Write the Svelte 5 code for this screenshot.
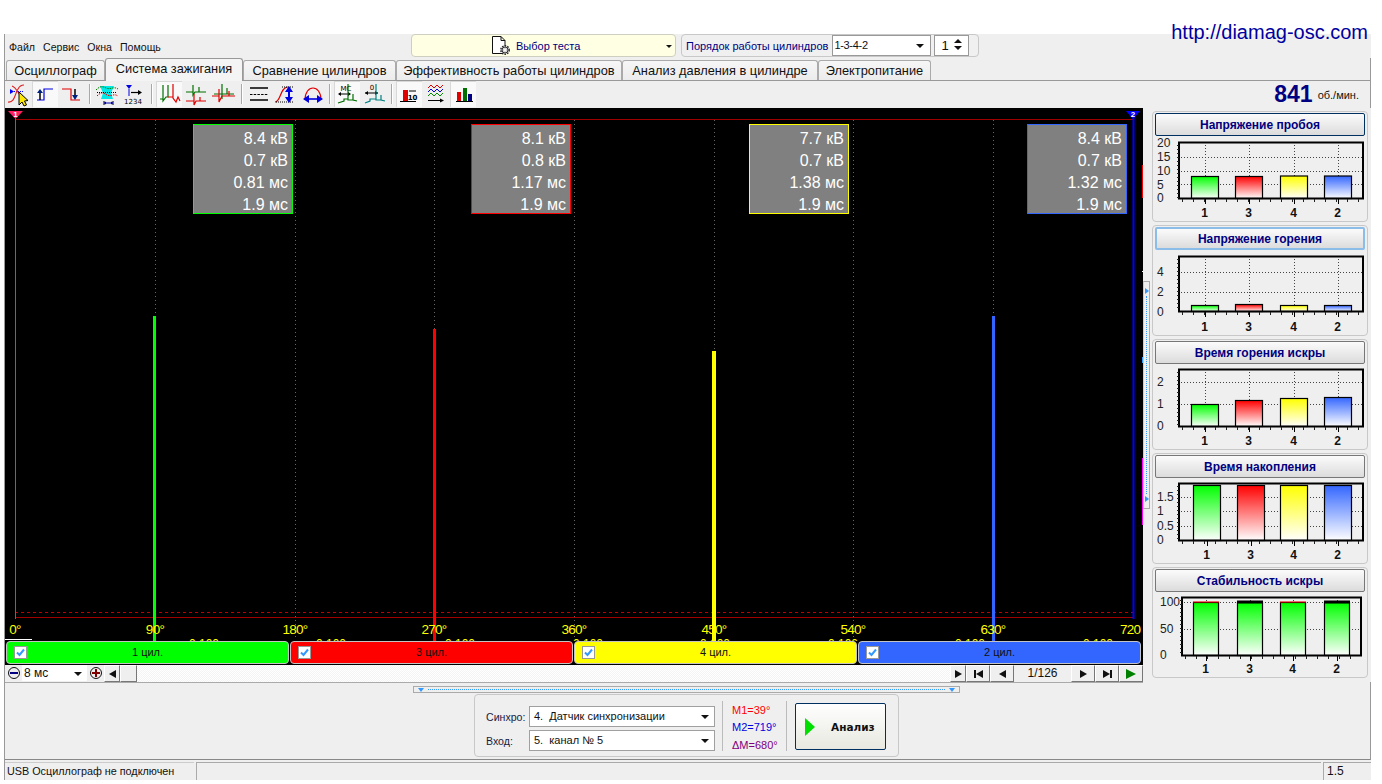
<script>
  const menu = ['Файл', 'Сервис', 'Окна', 'Помощь'];
  const tabs = [
    { label: 'Осциллограф', w: 99 },
    { label: 'Система зажигания', w: 138, active: true },
    { label: 'Сравнение цилиндров', w: 153 },
    { label: 'Эффективность работы цилиндров', w: 226 },
    { label: 'Анализ давления в цилиндре', w: 196 },
    { label: 'Электропитание', w: 113 }
  ];
  const GREEN = '#00ff00', RED = '#ff0000', YELLOW = '#ffff00', BLUE = '#3366ff';
  const colors = [GREEN, RED, YELLOW, BLUE];
  const cylNames = ['1', '3', '4', '2'];

  const grid = [150, 290, 429, 569, 709, 848, 988];
  const degrees = [
    { t: '0°', x: 10 }, { t: '90°', x: 150 }, { t: '180°', x: 290 }, { t: '270°', x: 429 }, { t: '360°', x: 569 },
    { t: '450°', x: 709 }, { t: '540°', x: 848 }, { t: '630°', x: 988 }
  ];
  const times = [184, 311, 440, 568, 695, 823, 950, 1078];
  const spikes = [
    { x: 148, w: 3, top: 208, c: GREEN },
    { x: 428, w: 3, top: 221, c: RED },
    { x: 707, w: 4, top: 243, c: YELLOW },
    { x: 987, w: 3, top: 208, c: BLUE }
  ];
  const boxes = [
    { x: 188, c: GREEN, rows: ['8.4 кВ', '0.7 кВ', '0.81 мс', '1.9 мс'] },
    { x: 466, c: RED, rows: ['8.1 кВ', '0.8 кВ', '1.17 мс', '1.9 мс'] },
    { x: 744, c: YELLOW, rows: ['7.7 кВ', '0.7 кВ', '1.38 мс', '1.9 мс'] },
    { x: 1022, c: BLUE, rows: ['8.4 кВ', '0.7 кВ', '1.32 мс', '1.9 мс'] }
  ];

  const normalBars = [38, 82, 127, 171];
  const charts = [
    {
      title: 'Напряжение пробоя', cls: 'focused', x0: 25, x1: 210, y0: 6, y1: 62, lx: 4,
      ticks: [['20', 7], ['15', 21], ['10', 35], ['5', 49], ['0', 62]], gridY: [21, 35, 48],
      bars: normalBars, w: 27, tops: [40, 40, 39.5, 39.5]
    },
    {
      title: 'Напряжение горения', cls: 'hot', x0: 25, x1: 210, y0: 6, y1: 61, lx: 4,
      ticks: [['4', 22], ['2', 42], ['0', 62]], gridY: [22, 42],
      bars: normalBars, w: 27, tops: [55, 54, 55, 55]
    },
    {
      title: 'Время горения искры', x0: 25, x1: 210, y0: 5, y1: 62, lx: 4,
      ticks: [['2', 18], ['1', 40], ['0', 62]], gridY: [18, 40],
      bars: normalBars, w: 27, tops: [40, 36, 34, 33]
    },
    {
      title: 'Время накопления', x0: 25, x1: 210, y0: 5, y1: 62, lx: 4,
      ticks: [['1.5', 19], ['1', 33], ['0.5', 48], ['0', 62]], gridY: [19, 33, 48],
      bars: [40, 84, 127, 171], w: 27, tops: [7, 7, 7, 7]
    },
    {
      title: 'Стабильность искры', x0: 28, x1: 208, y0: 5, y1: 63, lx: 7,
      ticks: [['100', 10], ['50', 37], ['0', 63]], gridY: [10, 37],
      bars: [40, 84, 127, 171], w: 25, tops: [10, 10, 10, 10], stability: true
    }
  ];

  function barCenter(x, w) {
    return Math.round(x + w / 2) + 0.5;
  }
  function bottomTicks(c) {
    const out = [];
    for (let x = c.x0 + 4; x < c.x1; x += 11) out.push(x);
    return out;
  }
  function leftTicks(c) {
    const out = [];
    for (let y = c.y0 + 3; y < c.y1; y += 4) out.push(y);
    return out;
  }
</script>

<div class="page">
  <a class="site">http://diamag-osc.com</a>

  <div class="window">
    <div class="top">
      <nav class="menu">
        {#each menu as item}<span>{item}</span>{/each}
      </nav>
      <div class="test-select">
        <svg width="22" height="21" viewBox="0 0 22 21">
          <path d="M2.5 1.5 H11 L15 5.5 V18.5 H2.5 Z M11 1.5 V5.5 H15" fill="#fff" stroke="#111" />
          <circle cx="15" cy="15" r="4.2" fill="#e8e8e8" stroke="#222" stroke-width="1.4" stroke-dasharray="1.6 1.1" />
          <circle cx="15" cy="15" r="3" fill="#d8d8d8" stroke="#333" />
          <circle cx="15" cy="15" r="1" fill="#fff" />
        </svg>
        <span>Выбор теста</span>
        <i class="arrow small"></i>
      </div>
      <div class="order">
        <span>Порядок работы цилиндров</span>
        <div class="order-select">1-3-4-2<i class="arrow"></i></div>
        <div class="spin">1<span class="spin-arrows"><i class="up"></i><i class="arrow"></i></span></div>
      </div>
    </div>

    <div class="tabs">
      {#each tabs as tab}
        <div class="tab" class:active={tab.active} style="width:{tab.w}px">{tab.label}</div>
      {/each}
    </div>

    <div class="toolbar">
      <div class="group">
        <div class="tool">
          <svg viewBox="0 0 26 26">
            <path d="M6 8 L10 10.5 L6 13 Z" fill="#00f" /><path d="M10 10.5 H19" stroke="#00f" stroke-dasharray="1 1" />
            <path d="M4 21 C11 22 11 12 14 8 C15 6 17 4 20 4 M8 5 C12 6 14 12 20 20" stroke="#e02020" stroke-width="1.2" fill="none" />
            <path d="M15 11 V24 L18 21 L20 25 L22.5 24 L20.5 20 L24 19.5 Z" fill="#ffe800" stroke="#000" />
          </svg>
        </div>
        <div class="tool on">
          <svg viewBox="0 0 26 26">
            <path d="M5 19 H12 V8 H21" stroke="#0000e0" stroke-width="1.2" fill="none" />
            <path d="M8 19 V11" stroke="#000" stroke-width="1.5" /><path d="M5 12 L8 8 L11 12 Z" fill="#002080" />
          </svg>
        </div>
        <div class="tool">
          <svg viewBox="0 0 26 26">
            <path d="M2 8 H11 V19 H20" stroke="#e00000" stroke-width="1.2" fill="none" />
            <path d="M15 8 V15" stroke="#000" stroke-width="1.5" /><path d="M12 14 L15 19 L18 14 Z" fill="#002080" />
          </svg>
        </div>
      </div>
      <i class="sep near"></i>
      <div class="group tight">
        <div class="tool">
          <svg viewBox="0 0 26 26">
            <path d="M6 5 H20 L17 12 L19 18 H7 L9 12 Z" fill="#00e8e8" />
            <path d="M2 9 C6 5 8 5 12 7 C16 9 20 5 24 8" stroke="#008000" stroke-dasharray="1.5 1" fill="none" />
            <path d="M3 15 C7 11 9 11 13 14 C17 16 20 12 24 15" stroke="#e00000" stroke-dasharray="1.5 1" fill="none" />
            <path d="M3 11.5 H23" stroke="#000" stroke-dasharray="1 1" />
            <path d="M10 20 V24 M19 20 V24" stroke="#000" /><path d="M10 22 H19" stroke="#00a" /><path d="M10 22 L12 20.5 V23.5 Z M19 22 L17 20.5 V23.5 Z" fill="#00a" />
          </svg>
        </div>
        <div class="tool">
          <svg viewBox="0 0 26 26">
            <path d="M6 4 H12 L9 8 Z" fill="#0000e0" /><path d="M9 8 V15" stroke="#0000e0" />
            <path d="M11 11.5 H19" stroke="#000" stroke-width="1.2" /><path d="M18 9 L22 11.5 L18 14 Z" fill="#000" />
            <text x="13" y="23" class="mini" text-anchor="middle">1234</text>
          </svg>
        </div>
      </div>
      <i class="sep"></i>
      <div class="group">
        <div class="tool on">
          <svg viewBox="0 0 26 26">
            <path d="M4 18 H7 V4 V20 L10 16 H12 V4" stroke="#007000" stroke-width="1.2" fill="none" />
            <path d="M12 16 H17 V3 V17 L20 21 L22 16 L24 20" stroke="#e00000" stroke-width="1.2" fill="none" />
          </svg>
        </div>
        <div class="tool">
          <svg viewBox="0 0 26 26">
            <path d="M3 11 H10 V4 V14 L12 11 H16 V6 V11 H23" stroke="#007000" stroke-width="1.2" fill="none" />
            <path d="M3 20 H11 V13 V24 L13 20 H17 V16 V20 H23" stroke="#e00000" stroke-width="1.2" fill="none" />
          </svg>
        </div>
        <div class="tool">
          <svg viewBox="0 0 26 26">
            <path d="M4 13 H12 V3 V18 M12 13 H17 V7 V13 H24" stroke="#007000" stroke-width="1.2" fill="none" />
            <path d="M2 15 H9 V8 V21 L12 15 H19 V10 V15 H25" stroke="#e00000" stroke-width="1.2" fill="none" />
          </svg>
        </div>
      </div>
      <i class="sep"></i>
      <div class="group">
        <div class="tool">
          <svg viewBox="0 0 26 26">
            <path d="M4 7 H22 M4 19 H22" stroke="#000" stroke-width="1.3" />
            <path d="M4 13.5 H22" stroke="#000" stroke-dasharray="2.5 1.2" />
          </svg>
        </div>
        <div class="tool">
          <svg viewBox="0 0 26 26">
            <path d="M2 21 C8 21 7 6 15 6 " stroke="#e00000" stroke-width="1.2" fill="none" />
            <path d="M9 6 H20 M3 21 H20" stroke="#000" stroke-dasharray="1 1" />
            <path d="M16 9 V18" stroke="#0000e0" stroke-width="2" /><path d="M12 11 L16 5 L20 11 Z M12 16 L16 22 L20 16 Z" fill="#0000e0" />
          </svg>
        </div>
        <div class="tool">
          <svg viewBox="0 0 26 26">
            <path d="M5 19 C5 3 21 3 21 19" stroke="#e00000" stroke-width="1.2" fill="none" />
            <path d="M7 18 H19" stroke="#0000e0" stroke-width="1.6" /><path d="M9 14 L3 18 L9 22 Z M17 14 L23 18 L17 22 Z" fill="#0000e0" />
          </svg>
        </div>
      </div>
      <i class="sep near"></i>
      <div class="group">
        <div class="tool on">
          <svg viewBox="0 0 26 26">
            <text x="12" y="10" class="mini" text-anchor="middle">МС</text>
            <path d="M5 13 H16" stroke="#000" /><path d="M7 11 L4 13 L7 15 Z M14 11 L17 13 L14 15 Z" fill="#000" />
            <path d="M4 22 L10 20 V18 H14 V3 V19 H19 V13 V19 L23 20" stroke="#007000" stroke-width="1.2" fill="none" />
          </svg>
        </div>
        <div class="tool">
          <svg viewBox="0 0 26 26">
            <text x="11" y="9" class="mini" text-anchor="middle">0</text>
            <path d="M4 12 H17" stroke="#000" /><path d="M7 10 L4 12 L7 14 Z M14 10 L17 12 L14 14 Z" fill="#000" />
            <path d="M4 22 L9 20 V18 H15 V3 V19 H20 V14 V19 L24 20" stroke="#008080" stroke-width="1.2" fill="none" />
          </svg>
        </div>
      </div>
      <i class="sep mid"></i>
      <div class="group">
        <div class="tool on">
          <svg viewBox="0 0 26 26">
            <rect x="7" y="9" width="5" height="11" fill="#e00000" />
            <path d="M13 10 H20 M4 20.5 H20" stroke="#000" />
            <text x="16.5" y="18.5" class="mini bold" text-anchor="middle">10</text>
          </svg>
        </div>
        <div class="tool">
          <svg viewBox="0 0 26 26">
            <path d="M5 7 L8 4 L11 7 L14 4 L17 7 L20 4" stroke="#e00000" fill="none" />
            <path d="M5 11 L8 8 L11 11 L14 8 L17 11 L20 8" stroke="#0000e0" fill="none" />
            <path d="M5 15 L8 12 L11 15 L14 12 L17 15 L20 12" stroke="#009000" fill="none" />
            <path d="M5 19.5 H18" stroke="#000" /><path d="M17 17.5 L21 19.5 L17 21.5 Z" fill="#000" />
          </svg>
        </div>
        <div class="tool on">
          <svg viewBox="0 0 26 26">
            <rect x="7" y="11" width="4" height="9" fill="#e00000" />
            <rect x="13" y="7" width="4" height="13" fill="#007000" />
            <rect x="18" y="13" width="4" height="7" fill="#000080" />
            <path d="M6 20.5 H23" stroke="#000" />
          </svg>
        </div>
      </div>
      <div class="rpm"><b>841</b><span>об./мин.</span></div>
    </div>

    <div class="main">
      <div class="left">
        <div class="scope">
          <div class="plot">
            <svg class="plot-lines" width="1138" height="533">
              <path d="M10 11.5 H1128" stroke="#a00000" />
              {#each grid as x}
                <path d="M{x + 0.5} 12 V530" stroke="#666" stroke-dasharray="1 3" />
              {/each}
              <path d="M10 504.5 H1128" stroke="#c00000" stroke-dasharray="3 3" />
              <path d="M10 509.5 H1128" stroke="#a00000" />
              <path d="M10.5 4 V511" stroke="#ff2060" />
              <path d="M1128.5 4 V511" stroke="#0000ff" stroke-width="2" />
              <path d="M3 3 H18 L10.5 11 Z" fill="#ff2060" />
              <path d="M1121 3 H1135 L1128 11 Z" fill="#0000ff" />
              <text x="10.5" y="9" class="marker">1</text>
              <text x="1128" y="9" class="marker">2</text>
              {#each spikes as s}
                <rect x={s.x} y={s.top} width={s.w} height={533 - s.top} fill={s.c} />
              {/each}
              <rect x="1137" y="57" width="1" height="33" fill="#ff0000" />
              <rect x="1137" y="350" width="1" height="67" fill="#ff00ff" />
              <rect x="1137" y="163" width="1" height="1" fill="#fff" />
              <rect x="1137" y="249" width="1" height="6" fill="#3399ff" />
              <path d="M0 531.5 H27" stroke="#fff" />
            </svg>

            {#each boxes as b}
              <div class="info" style="left:{b.x}px;border-color:{b.c}">
                {#each b.rows as row}<div>{row}</div>{/each}
              </div>
            {/each}

            {#each degrees as d}
              <span class="deg" style="left:{d.x}px">{d.t}</span>
            {/each}
            <span class="deg last">720</span>
            {#each times as x}
              <span class="time" style="left:{x}px">0.100</span>
            {/each}
          </div>
          <div class="cyls">
            {#each colors as c, i}
              <div class="cyl" style="background:{c}">
                <span class="check">
                  <svg width="11" height="11" viewBox="0 0 11 11"><path d="M2 5.5 L4.5 8 L9 2.5" stroke="#3399ff" stroke-width="2" fill="none" /></svg>
                </span>
                <span>{cylNames[i]} цил.</span>
              </div>
            {/each}
          </div>
        </div>

        <div class="scroll">
          <button class="round minus"><i></i></button>
          <div class="scale">8 мс<i class="arrow"></i></div>
          <button class="round plus"><i></i></button>
          <button class="nav left-btn"><i class="tri-l"></i></button>
          <div class="thumb"></div>
          <div class="track"></div>
          <button class="nav small"><i class="tri-r"></i></button>
          <button class="nav wide"><b class="bar"></b><i class="tri-l"></i></button>
          <button class="nav wide"><i class="tri-l"></i></button>
          <div class="counter">1/126</div>
          <button class="nav wide"><i class="tri-r"></i></button>
          <button class="nav wide"><i class="tri-r"></i><b class="bar"></b></button>
          <button class="nav wide"><i class="tri-r go"></i></button>
        </div>
      </div>

      <div class="v-split">
        <i class="t-right"></i>
        <i class="t-right"></i>
      </div>

      <div class="right">
        {#each charts as ch, ci}
          <section class="card">
            <div class="card-title {ch.cls || ''}">{ch.title}</div>
            <svg width="214" height="85" class="chart">
              <defs>
                {#each colors as c, i}
                  <linearGradient id="g{ci}-{i}" x1="0" y1="0" x2="0" y2="1">
                    <stop offset="0" stop-color={ch.stability ? GREEN : c} />
                    <stop offset="1" stop-color="#fff" />
                  </linearGradient>
                {/each}
              </defs>
              {#each ch.gridY as y}
                <path d="M{ch.x0} {y + 0.5} H{ch.x1}" stroke="#444" stroke-dasharray="1 2" />
              {/each}
              {#each ch.bars as x}
                <path d="M{barCenter(x, ch.w)} {ch.y0} V{ch.y1}" stroke="#444" stroke-dasharray="1 2" />
              {/each}
              {#each ch.bars as x, i}
                <rect x={x + 0.5} y={ch.tops[i] + 0.5} width={ch.w} height={ch.y1 - ch.tops[i]} fill="url(#g{ci}-{i})" stroke="#000" stroke-width="1.2" />
                {#if ch.stability}
                  <path d="M{x} {ch.tops[i]} H{x + ch.w + 1}" stroke={i === 0 || i === 2 ? '#ff0000' : '#000'} stroke-width={i === 0 || i === 2 ? 1 : 3} />
                {/if}
              {/each}
              <rect x={ch.x0 + 1} y={ch.y0 + 0.5} width={ch.x1 - ch.x0 - 1} height={ch.y1 - ch.y0} fill="none" stroke="#000" stroke-width="2" />
              {#each bottomTicks(ch) as x}
                <path d="M{x + 0.5} {ch.y1 + 1} V{ch.y1 + 4}" stroke="#222" />
              {/each}
              {#each ch.bars as x}
                <path d="M{barCenter(x, ch.w)} {ch.y1 + 1} V{ch.y1 + 6}" stroke="#000" />
              {/each}
              {#each leftTicks(ch) as y}
                <path d="M{ch.x0 - 1} {y + 0.5} H{ch.x0 + 1}" stroke="#222" />
              {/each}
              {#each ch.ticks as t}
                <text x={ch.lx} y={t[1] + 4} class="axis">{t[0]}</text>
              {/each}
              {#each ch.bars as x, i}
                <text x={x + ch.w / 2} y="81" class="cat" text-anchor="middle">{cylNames[i]}</text>
              {/each}
            </svg>
          </section>
        {/each}
      </div>
    </div>

    <div class="bottom">
      <div class="h-split">
        <i class="t-down"></i>
        <i class="t-down"></i>
      </div>
      <div class="panel">
        <div class="inputs">
          <label><span>Синхро:</span><div class="field">4.&nbsp; Датчик синхронизации<i class="arrow"></i></div></label>
          <label><span>Вход:</span><div class="field">5.&nbsp; канал № 5<i class="arrow"></i></div></label>
        </div>
        <i class="p-sep"></i>
        <div class="marks">
          <span class="m1">M1=39°</span>
          <span class="m2">M2=719°</span>
          <span class="dm">ΔM=680°</span>
        </div>
        <i class="p-sep"></i>
        <button class="run"><i></i><span>Анализ</span></button>
      </div>
    </div>

    <footer class="status">
      <div class="st first">USB Осциллограф не подключен</div>
      <div class="st grow"></div>
      <div class="st last-st">1.5</div>
    </footer>
  </div>
</div>

<style>
  :global(body) {
    margin: 0;
    background: #fff;
    font-family: "Liberation Sans", Arial, sans-serif;
    font-size: 11px;
    color: #111;
  }
  .page {
    position: relative;
    width: 1382px;
    height: 784px;
    padding-top: 34px;
    box-sizing: border-box;
    overflow: hidden;
  }
  .site {
    position: absolute;
    top: 21px;
    right: 14px;
    font-size: 20px;
    color: #0000a0;
    z-index: 2;
  }
  .window {
    margin-left: 4px;
    width: 1367px;
    height: 746px;
    box-sizing: border-box;
    background: #efefef;
    border-left: 1px solid #999;
    display: flex;
    flex-direction: column;
  }

  .top { height: 24px; display: flex; align-items: flex-start; flex-shrink: 0; }
  .menu { display: flex; gap: 8px; width: 406px; padding: 7px 0 0 4px; box-sizing: border-box; font-size: 10.6px; }
  .test-select {
    width: 265px; height: 23px; box-sizing: border-box;
    background: #ffffe4; border: 1px solid #cfcfc0; border-radius: 4px;
    display: flex; align-items: center; padding-left: 78px; color: #000080;
    position: relative;
  }
  .test-select span { margin-left: 4px; }
  .test-select .arrow { position: absolute; right: 3px; top: 10px; }
  .order {
    margin-left: 5px; width: 298px; height: 23px; box-sizing: border-box;
    border: 1px solid #c8c8c8; border-radius: 4px; background: #f0f0f0;
    display: flex; align-items: center; padding-left: 4px; color: #000080;
    white-space: nowrap;
  }
  .order-select {
    margin-left: 4px; width: 99px; height: 21px; box-sizing: border-box;
    background: #fff; border: 1px solid #999; color: #111; padding: 3px 0 0 1px;
    position: relative; letter-spacing: -0.3px;
  }
  .order-select .arrow { position: absolute; right: 6px; top: 8px; }
  .spin {
    margin-left: 3px; width: 35px; height: 21px; box-sizing: border-box;
    background: #fff; border: 1px solid #999; color: #111; font-size: 13px;
    padding: 2px 0 0 6px; position: relative;
  }
  .spin-arrows { position: absolute; right: 6px; top: 3px; display: flex; flex-direction: column; gap: 3px; }

  .arrow, .up { display: block; width: 0; height: 0; border-left: 4px solid transparent; border-right: 4px solid transparent; }
  .arrow { border-top: 4px solid #111; }
  .up { border-bottom: 4px solid #111; }
  .arrow.small { border-left-width: 3px; border-right-width: 3px; border-top-width: 3px; }

  .tabs {
    height: 23px; flex-shrink: 0; box-sizing: border-box;
    display: flex; align-items: flex-end; padding-left: 1px;
    border-bottom: 1px solid #999;
    border-right: 1px solid #999;
  }
  .tab {
    height: 20px; box-sizing: border-box;
    border: 1px solid #aaa; border-bottom: none; border-radius: 3px 3px 0 0;
    background: linear-gradient(#f6f6f6, #ececec);
    font-size: 12.8px; text-align: center; line-height: 20px; white-space: nowrap;
  }
  .tab.active {
    height: 23px; background: #f4f4f4; line-height: 20px;
    margin-bottom: -1px; border-color: #999;
  }

  .toolbar {
    height: 27px; flex-shrink: 0; display: flex; align-items: flex-start;
    border-right: 1px solid #999; box-sizing: border-box;
  }
  .group { display: flex; gap: 2px; }
  .group:first-child { margin-left: -1px; }
  .group.tight { gap: 0; }
  .group:nth-of-type(n+3) { gap: 1px; }
  .tool { width: 26px; height: 26px; }
  .tool svg { width: 26px; height: 26px; display: block; }
  .tool.on { background: #f9f9f9; box-shadow: inset 1px 1px 0 #d8d8d8; }
  .sep { width: 2px; height: 20px; margin: 3px 3px 0 5px; background: #a8a8a8; border-right: 1px solid #fff; box-sizing: border-box; }
  .sep.near { margin-left: 3px; }
  .sep.mid { margin-left: 4px; }
  .mini { font-size: 7px; font-family: "DejaVu Sans", sans-serif; fill: #000; }
  .mini.bold { font-weight: 700; }
  .rpm { margin-left: auto; padding-right: 11px; display: flex; align-items: center; gap: 5px; height: 26px; }
  .rpm b { font-size: 23px; color: #000080; line-height: 27px; }
  .rpm span { font-size: 11px; margin-top: 2px; }

  .main { display: flex; height: 574px; flex-shrink: 0; }
  .left { width: 1138px; display: flex; flex-direction: column; flex-shrink: 0; }
  .scope { height: 557px; background: #000; display: flex; flex-direction: column; }
  .plot { position: relative; height: 533px; overflow: hidden; }
  .plot-lines { position: absolute; left: 0; top: 0; }
  .marker { font-size: 8px; font-weight: 700; fill: #fff; text-anchor: middle; }
  .info {
    position: absolute; top: 16px; width: 100px; height: 90px; box-sizing: border-box;
    background: #808080; border: 1px solid; color: #fff; font-size: 16px;
    line-height: 22px; text-align: right; padding: 3px 4px 0 0;
  }
  .deg {
    position: absolute; top: 514px; transform: translateX(-50%);
    color: #ffff00; font-size: 13.5px; letter-spacing: -0.7px; line-height: 16px;
  }
  .deg.last { left: 1115px; transform: none; }
  .time { position: absolute; top: 529px; color: #ffff00; font-size: 12px; line-height: 14px; }

  .cyls { height: 24px; display: flex; gap: 1px; padding: 0 0 1px 1px; box-sizing: border-box; }
  .cyl {
    width: 283px; height: 23px; box-sizing: border-box;
    border: 1px solid #c4c4c4; border-radius: 4px;
    position: relative; text-align: center; line-height: 21px; color: #111;
  }
  .check {
    position: absolute; left: 7px; top: 4px; width: 13px; height: 13px; box-sizing: border-box;
    background: #fff; border: 1px solid #999; display: flex; align-items: center; justify-content: center;
  }

  .scroll { height: 17px; display: flex; border-bottom: 1px solid #aaa; background: #efefef; }
  .scroll button { padding: 0; margin: 0; background: #efefef; }
  .round {
    width: 16px; height: 16px; border: none; position: relative; flex-shrink: 0;
    margin-left: 1px !important;
  }
  .round::before {
    content: ""; position: absolute; left: 2px; top: 2px; width: 10px; height: 10px;
    border: 1px solid #111; border-radius: 50%; background: #eee;
  }
  .round i { position: absolute; left: 4px; top: 7px; width: 8px; height: 2px; background: #000080; }
  .round.plus i { background: #800000; }
  .round.plus i::after { content: ""; position: absolute; left: 3px; top: -3px; width: 2px; height: 8px; background: #800000; }
  .scale {
    width: 65px; height: 16px; background: #fff; box-sizing: border-box;
    padding: 1px 0 0 2px; font-size: 12px; position: relative; flex-shrink: 0;
  }
  .scale .arrow { position: absolute; right: 5px; top: 7px; }
  .nav {
    width: 23px; height: 17px; box-sizing: border-box; flex-shrink: 0;
    border: 1px solid; border-color: #fff #777 #777 #fff;
    display: flex; align-items: center; justify-content: center;
  }
  .nav.left-btn, .nav.small { width: 16px; }
  .nav.wide { width: 24px; }
  .tri-l, .tri-r { display: block; width: 0; height: 0; border-top: 4px solid transparent; border-bottom: 4px solid transparent; }
  .tri-l { border-right: 7px solid #111; }
  .tri-r { border-left: 7px solid #111; }
  .tri-r.go { border-left-color: #008000; border-top-width: 5px; border-bottom-width: 5px; border-left-width: 10px; }
  .bar { display: block; width: 2px; height: 8px; background: #111; }
  .thumb { width: 17px; height: 17px; box-sizing: border-box; background: #efefef; border: 1px solid; border-color: #fff #777 #777 #fff; flex-shrink: 0; }
  .track { flex: 1; background: repeating-conic-gradient(#f4f4f4 0 25%, #fff 0 50%) 0 0 / 2px 2px; }
  .counter { width: 57px; text-align: center; font-size: 12px; line-height: 17px; flex-shrink: 0; }

  .v-split {
    width: 7px; height: 228px; margin-top: 173px; box-sizing: border-box;
    border: 1px solid #aaa; border-left-color: #ccc; background: #efefef;
    display: flex; flex-direction: column; justify-content: space-between; align-items: center;
    padding: 6px 0; position: relative;
  }
  .v-split::before {
    content: ""; position: absolute; left: 2px; top: 14px; bottom: 14px;
    border-left: 1px dotted #3399ff;
  }
  .t-right { display: block; width: 0; height: 0; border-top: 3px solid transparent; border-bottom: 3px solid transparent; border-left: 4px solid #3399ff; }

  .right { width: 216px; margin: 3px 0 0 2px; display: flex; flex-direction: column; gap: 3px; flex-shrink: 0; }
  .card {
    height: 111px; box-sizing: border-box;
    border: 1px solid #c8c8c8; border-radius: 4px;
    padding: 1px 1px 0;
  }
  .card-title {
    height: 23px; margin: 0 1px; box-sizing: border-box;
    border: 1px solid #777; border-radius: 2px;
    background: linear-gradient(#fbfbfb, #dcdcdc);
    color: #000080; font-weight: 700; font-size: 12px; line-height: 23px; text-align: center;
  }
  .card-title.focused { border-color: #003060; }
  .card-title.hot { border: 2px solid #8cbce8; line-height: 21px; }
  .chart { display: block; margin-left: -1px; }
  .axis { font-size: 12px; fill: #222; }
  .cat { font-size: 12px; font-weight: 700; fill: #111; }

  .bottom { display: flex; flex-direction: column; align-items: center; height: 78px; flex-shrink: 0; box-sizing: border-box; padding-top: 4px; border-bottom: 1px solid #888; border-right: 1px solid #999; }
  .h-split {
    width: 547px; height: 7px; box-sizing: border-box; border: 1px solid #aaa;
    display: flex; justify-content: space-between; padding: 1px 4px; position: relative; flex-shrink: 0;
    margin-right: 2px;
  }
  .h-split::before { content: ""; position: absolute; left: 14px; right: 14px; top: 2px; border-top: 1px dotted #3399ff; }
  .t-down { display: block; width: 0; height: 0; border-left: 3px solid transparent; border-right: 3px solid transparent; border-top: 4px solid #3399ff; }
  .panel {
    margin: 1px 2px 0 0; width: 425px; height: 63px; box-sizing: border-box; flex-shrink: 0;
    border: 1px solid #c8c8c8; border-radius: 4px;
    display: flex; align-items: center; padding: 6px 0 0 11px;
  }
  .inputs { display: flex; flex-direction: column; gap: 3px; }
  .inputs label { display: flex; align-items: center; width: 229px; }
  .inputs span { width: 43px; color: #1a1a40; font-size: 10.6px; }
  .field {
    width: 186px; height: 21px; box-sizing: border-box; background: #fff; border: 1px solid #a0a0a0;
    padding: 3px 0 0 4px; position: relative; font-size: 11px; color: #111;
  }
  .field .arrow { position: absolute; right: 5px; top: 8px; }
  .p-sep { width: 1px; height: 50px; background: #bbb; margin: 0 0 6px 7px; flex-shrink: 0; }
  .marks { display: flex; flex-direction: column; gap: 4.5px; width: 56px; box-sizing: border-box; padding-left: 9px; margin-bottom: 2px; font-size: 11px; line-height: 13px; white-space: nowrap; }
  .m1 { color: #ff0000; }
  .m2 { color: #0000e0; }
  .dm { color: #800080; }
  .run {
    margin: 0 0 4px 8px; width: 91px; height: 47px; box-sizing: border-box;
    border: 1px solid #003060; border-radius: 2px; background: linear-gradient(#fff, #e8e8e0);
    display: flex; align-items: center; padding: 0 0 0 9px;
  }
  .run i { width: 0; height: 0; border-top: 9px solid transparent; border-bottom: 9px solid transparent; border-left: 10px solid #00e000; }
  .run span { margin-left: 16px; font-family: "DejaVu Sans", sans-serif; font-weight: 700; font-size: 10.5px; color: #111; }

  .status { display: flex; height: 20px; padding-top: 2px; box-sizing: border-box; gap: 2px; flex-shrink: 0; }
  .st { box-sizing: border-box; border-top: 1px solid #aaa; line-height: 16px; padding-left: 3px; border-left: 1px solid #aaa; }
  .st.first { width: 189px; border-left: none; border-top-color: #ccc; padding-left: 2px; font-size: 10.8px; }
  .st.grow { flex: 1; }
  .st.last-st { width: 48px; font-size: 12px; }
</style>
